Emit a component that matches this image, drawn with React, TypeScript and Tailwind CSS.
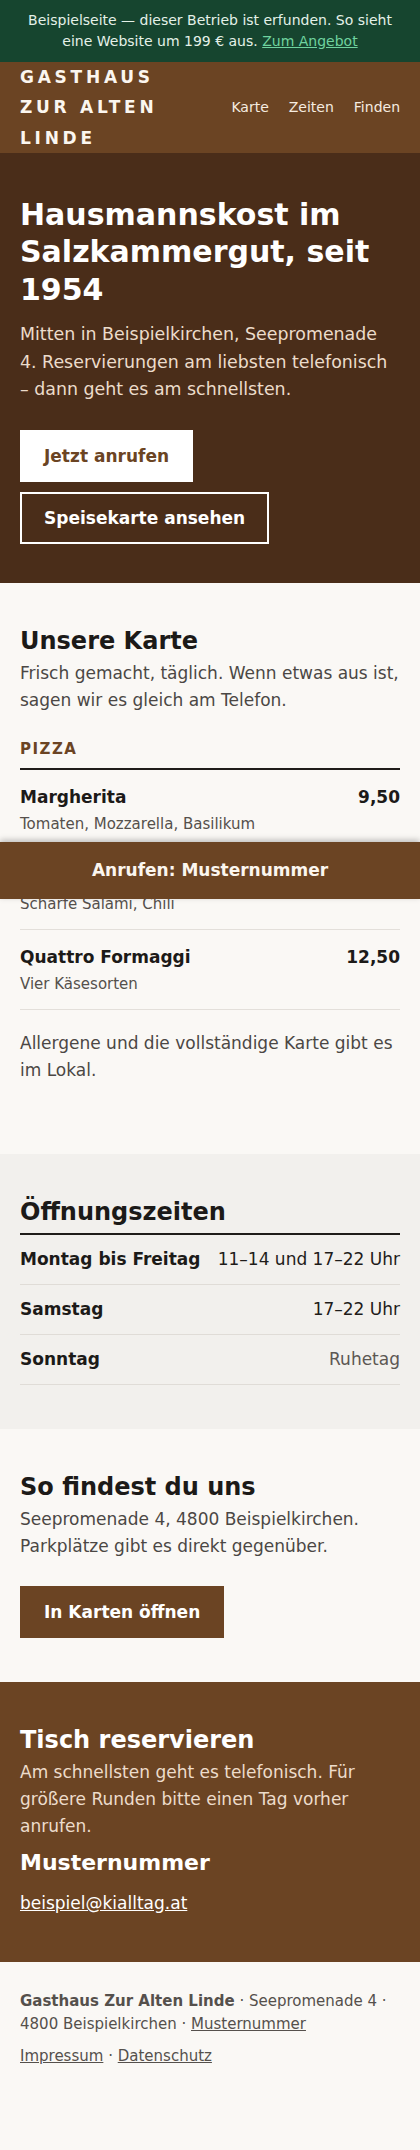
import React from "react";

const items = [
  { name: "Margherita", desc: "Tomaten, Mozzarella, Basilikum", price: "9,50" },
  { name: "Diavola", desc: "Scharfe Salami, Chili", price: "11,50" },
  { name: "Quattro Formaggi", desc: "Vier Käsesorten", price: "12,50" },
];

const hours = [
  { day: "Montag bis Freitag", time: "11–14 und 17–22 Uhr", closed: false },
  { day: "Samstag", time: "17–22 Uhr", closed: false },
  { day: "Sonntag", time: "Ruhetag", closed: true },
];

const App = () => {
  return (
    <div className="relative min-h-screen bg-[#faf8f5] font-['DejaVu_Sans',sans-serif] text-[#1c1a18]">
      {/* Demo-Hinweis */}
      <div className="bg-[#16452f] px-5 py-[10px] text-center text-[14px] leading-[21px] text-[#e4f1e8]">
        Beispielseite — dieser Betrieb ist erfunden. So sieht eine Website um 199 € aus.{" "}
        <a href="#" className="text-[#6fd39f] underline">
          Zum Angebot
        </a>
      </div>

      {/* Kopf */}
      <header className="flex items-center justify-between gap-6 bg-[#6b4423] px-5">
        <div className="max-w-[180px] text-[17px] font-bold uppercase leading-[30.3px] tracking-[0.22em] text-[#fbf6ef]">
          Gasthaus Zur Alten Linde
        </div>
        <nav className="flex gap-5 text-[14px] text-[#f6ece0]">
          <a href="#karte">Karte</a>
          <a href="#zeiten">Zeiten</a>
          <a href="#finden">Finden</a>
        </nav>
      </header>

      {/* Hero */}
      <section className="bg-[#4a2d19] px-5 pt-[43px] pb-[39px]">
        <h1 className="text-[30px] font-bold leading-[37.5px] text-white">
          Hausmannskost im Salzkammergut, seit 1954
        </h1>
        <p className="mt-[13px] max-w-[376px] text-[17.4px] leading-[27.5px] text-[#ecdccb]">
          Mitten in Beispielkirchen, Seepromenade 4. Reservierungen am liebsten telefonisch – dann geht es am
          schnellsten.
        </p>
        <div className="mt-[26px] flex flex-col items-start gap-[10px]">
          <a href="#" className="border-2 border-white bg-white px-[22px] py-3 text-[17px] font-bold leading-[24px] text-[#6b4423]">
            Jetzt anrufen
          </a>
          <a href="#karte" className="border-2 border-white px-[22px] py-3 text-[17px] font-bold leading-[24px] text-white">
            Speisekarte ansehen
          </a>
        </div>
      </section>

      {/* Karte */}
      <section id="karte" className="bg-[#faf8f5] px-5 pt-10 pb-[70px]">
        <h2 className="text-[24px] font-bold leading-[36px]">Unsere Karte</h2>
        <p className="mt-[1px] text-[17px] leading-[27px] text-[#4b4744]">
          Frisch gemacht, täglich. Wenn etwas aus ist, sagen wir es gleich am Telefon.
        </p>
        <h3 className="mt-6 border-b-2 border-[#1f1c1a] pb-2 text-[15px] font-bold uppercase leading-[22px] tracking-[0.1em] text-[#6b4423]">
          Pizza
        </h3>
        <ul>
          {items.map((item) => (
            <li key={item.name} className="border-b border-[#e3dfda] pt-[14px] pb-[13px]">
              <div className="flex justify-between gap-4 text-[17px] font-bold leading-[26px]">
                <span>{item.name}</span>
                <span>{item.price}</span>
              </div>
              <div className="mt-0.5 text-[15px] leading-[24px] text-[#55504c]">{item.desc}</div>
            </li>
          ))}
        </ul>
        <p className="mt-5 text-[17px] leading-[27px] text-[#4b4744]">
          Allergene und die vollständige Karte gibt es im Lokal.
        </p>
      </section>

      {/* Öffnungszeiten */}
      <section id="zeiten" className="bg-[#f2f0ed] px-5 pt-10 pb-11">
        <h2 className="border-b-2 border-[#1f1c1a] pb-[3px] text-[24px] font-bold leading-[36px]">Öffnungszeiten</h2>
        <ul>
          {hours.map((h) => (
            <li key={h.day} className="flex justify-between border-b border-[#e0dcd7] py-3 text-[17px] leading-[25px]">
              <span className="font-bold">{h.day}</span>
              <span className={h.closed ? "text-[#5c5753]" : "text-[#1f1c1a]"}>{h.time}</span>
            </li>
          ))}
        </ul>
      </section>

      {/* Anfahrt */}
      <section id="finden" className="bg-[#faf8f5] px-5 pt-10 pb-11">
        <h2 className="text-[24px] font-bold leading-[36px]">So findest du uns</h2>
        <p className="mt-[1px] text-[17px] leading-[27px] text-[#4b4744]">
          Seepromenade 4, 4800 Beispielkirchen. Parkplätze gibt es direkt gegenüber.
        </p>
        <a href="#" className="mt-[26px] inline-block border-2 border-[#6b4423] bg-[#6b4423] px-[22px] py-3 text-[17px] font-bold leading-[24px] text-white">
          In Karten öffnen
        </a>
      </section>

      {/* Reservieren */}
      <section className="bg-[#6b4423] px-5 pt-10 pb-[45px] text-white">
        <h2 className="text-[24px] font-bold leading-[36px]">Tisch reservieren</h2>
        <p className="mt-[1px] text-[17px] leading-[27px] text-[#eddccb]">
          Am schnellsten geht es telefonisch. Für größere Runden bitte einen Tag vorher anrufen.
        </p>
        <p className="mt-2 text-[22px] font-bold leading-[30px]">Musternummer</p>
        <a href="#" className="mt-3 inline-block text-[17px] leading-[27px] underline">
          beispiel@kialltag.at
        </a>
      </section>

      {/* Fuß */}
      <footer className="bg-[#faf8f5] px-5 pt-[28px] pb-[82px] text-[15px] leading-[23px] text-[#55504c]">
        <p>
          <strong>Gasthaus Zur Alten Linde</strong> · Seepromenade 4 · 4800 Beispielkirchen ·{" "}
          <a href="#" className="underline">
            Musternummer
          </a>
        </p>
        <p className="mt-[9px]">
          <a href="#" className="underline">
            Impressum
          </a>{" "}
          ·{" "}
          <a href="#" className="underline">
            Datenschutz
          </a>
        </p>
      </footer>

      {/* Anruf-Leiste */}
      <a
        href="#"
        className="absolute top-[842px] right-0 left-0 flex h-[57px] items-center justify-center bg-[#6b4423] text-[17px] font-bold text-[#fbf6ef] shadow-[0_-2px_6px_rgba(0,0,0,0.25)]"
      >
        Anrufen: Musternummer
      </a>
    </div>
  );
};

export default App;
